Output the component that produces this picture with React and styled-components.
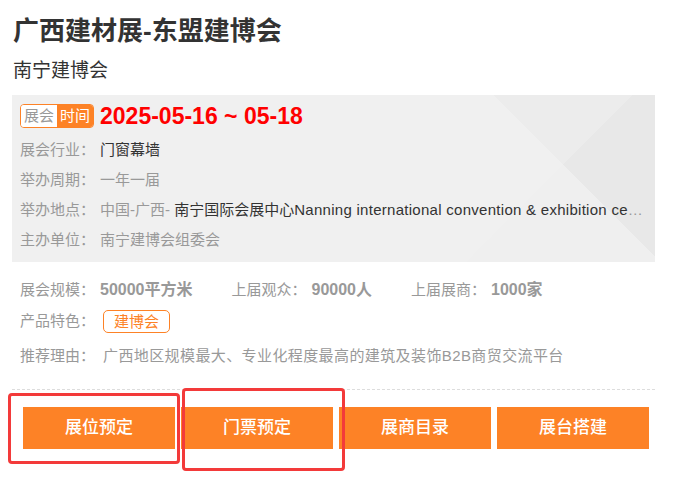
import React from "react";
import styled, { createGlobalStyle } from "styled-components";

const GlobalStyle = createGlobalStyle`
  body {
    margin: 0;
    background: #fff;
    font-family: "Liberation Sans", "Noto Sans CJK SC", sans-serif;
  }
`;

const FONT = `"Liberation Sans", "Noto Sans CJK SC", sans-serif`;

const infoRows = [
  { label: "展会行业：", value: "门窗幕墙", dark: true },
  { label: "举办周期：", value: "一年一届" },
  {
    label: "举办地点：",
    value: "中国-广西-",
    venue: " 南宁国际会展中心",
    venueEn: "Nanning international convention & exhibition center",
  },
  { label: "主办单位：", value: "南宁建博会组委会" },
];

const stats = [
  { label: "展会规模：", value: "50000平方米" },
  { label: "上届观众：", value: "90000人" },
  { label: "上届展商：", value: "1000家" },
];

const buttons = ["展位预定", "门票预定", "展商目录", "展台搭建"];

export default function App() {
  return (
    <>
      <GlobalStyle />
      <Card>
        <Title>广西建材展-东盟建博会</Title>
        <SubTitle>南宁建博会</SubTitle>

        <InfoBox>
          <DateRow>
            <Badge>
              <span className="left">展会</span>
              <span className="right">时间</span>
            </Badge>
            <DateText>2025-05-16 ~ 05-18</DateText>
          </DateRow>
          {infoRows.map((row) => (
            <InfoRow key={row.label}>
              <Label>{row.label}</Label>
              <Value $dark={row.dark}>
                {row.value}
                {row.venue && <Dark>{row.venue}</Dark>}
                {row.venueEn && <DarkLatin>{row.venueEn}</DarkLatin>}
              </Value>
            </InfoRow>
          ))}
        </InfoBox>

        <Details>
          <StatRow>
            {stats.map((s) => (
              <Stat key={s.label}>
                <Label>{s.label}</Label>
                <StatValue>{s.value}</StatValue>
              </Stat>
            ))}
          </StatRow>
          <TagRow>
            <Label $width={83}>产品特色：</Label>
            <Tag>建博会</Tag>
          </TagRow>
          <ReasonRow>
            <Label $width={83}>推荐理由：</Label>
            <Reason>广西地区规模最大、专业化程度最高的建筑及装饰B2B商贸交流平台</Reason>
          </ReasonRow>
        </Details>

        <Footer>
          {buttons.map((b) => (
            <ActionButton key={b}>{b}</ActionButton>
          ))}
          <Highlight $left={-4} $top={3} $w={172} $h={71} />
          <Highlight $left={170} $top={-2} $w={163} $h={83} />
        </Footer>
      </Card>
    </>
  );
}

const Card = styled.div`
  width: 643px;
  margin-left: 12px;
  padding-top: 13px;
  font-family: ${FONT};
`;

const Title = styled.h1`
  margin: 0 0 0 1px;
  font-size: 26px;
  line-height: 36px;
  font-weight: 700;
  color: #333;
`;

const SubTitle = styled.div`
  margin: 9px 0 0 1px;
  font-size: 19px;
  line-height: 26px;
  color: #333;
`;

const InfoBox = styled.div`
  margin-top: 11px;
  height: 167px;
  box-sizing: border-box;
  padding: 9px 10px 7px 8px;
  background: conic-gradient(
    from -45deg at 551px 70px,
    #ececec 0deg 90deg,
    #e8e8e8 90deg 180deg,
    #efefef 180deg 270deg,
    #f0f0f0 270deg 360deg
  );
`;

const DateRow = styled.div`
  display: flex;
  align-items: center;
  height: 24px;
  margin-bottom: 7px;
`;

const Badge = styled.div`
  display: flex;
  height: 24px;
  box-sizing: border-box;
  border: 1px solid #fd8226;
  border-radius: 4px;
  overflow: hidden;
  font-size: 15px;
  line-height: 22px;
  span {
    padding: 0 3px;
  }
  .left {
    background: #fff;
    color: #999;
  }
  .right {
    background: #fd8226;
    color: #fff;
  }
`;

const DateText = styled.div`
  margin-left: 6px;
  font-size: 23px;
  font-weight: 700;
  color: #ff0000;
  line-height: 24px;
`;

const InfoRow = styled.div`
  display: flex;
  height: 30px;
  line-height: 30px;
  font-size: 15px;
`;

const Label = styled.span`
  flex: none;
  width: ${(p) => p.$width || 80}px;
  color: #999;
  font-size: 15px;
  white-space: nowrap;
`;

const Value = styled.span`
  flex: 1;
  min-width: 0;
  color: ${(p) => (p.$dark ? "#333" : "#999")};
  font-size: 15px;
  white-space: nowrap;
  overflow: hidden;
  text-overflow: ellipsis;
`;

const Reason = styled(Value)`
  letter-spacing: 0.4px;
`;

const Dark = styled.span`
  color: #333;
`;

const DarkLatin = styled.span`
  color: #333;
  letter-spacing: 0.28px;
`;

const Details = styled.div`
  padding: 13px 0 0 8px;
`;

const StatRow = styled.div`
  display: flex;
  height: 30px;
  line-height: 30px;
`;

const Stat = styled.div`
  display: flex;
  margin-right: 39px;
`;

const StatValue = styled.span`
  font-size: 16px;
  font-weight: 700;
  color: #999;
`;

const TagRow = styled.div`
  display: flex;
  align-items: center;
  height: 32px;
  line-height: 32px;
`;

const Tag = styled.span`
  height: 23px;
  box-sizing: border-box;
  padding: 0 10px;
  border: 1px solid #fd8226;
  border-radius: 5px;
  color: #fd8226;
  font-size: 15px;
  line-height: 21px;
`;

const ReasonRow = styled.div`
  display: flex;
  margin-top: 4px;
  height: 30px;
  line-height: 30px;
`;

const Footer = styled.div`
  position: relative;
  margin-top: 18px;
  border-top: 1px dashed #ddd;
  padding: 17px 6px 29px 11px;
  display: flex;
  gap: 6px;
`;

const ActionButton = styled.div`
  width: 152px;
  height: 42px;
  line-height: 42px;
  text-align: center;
  background: #fd8226;
  color: #fff;
  font-size: 17px;
  font-weight: 500;
  cursor: pointer;
`;

const Highlight = styled.div`
  position: absolute;
  left: ${(p) => p.$left}px;
  top: ${(p) => p.$top}px;
  width: ${(p) => p.$w}px;
  height: ${(p) => p.$h}px;
  box-sizing: border-box;
  border: 3px solid #f33a3a;
  border-radius: 4px;
  pointer-events: none;
`;
